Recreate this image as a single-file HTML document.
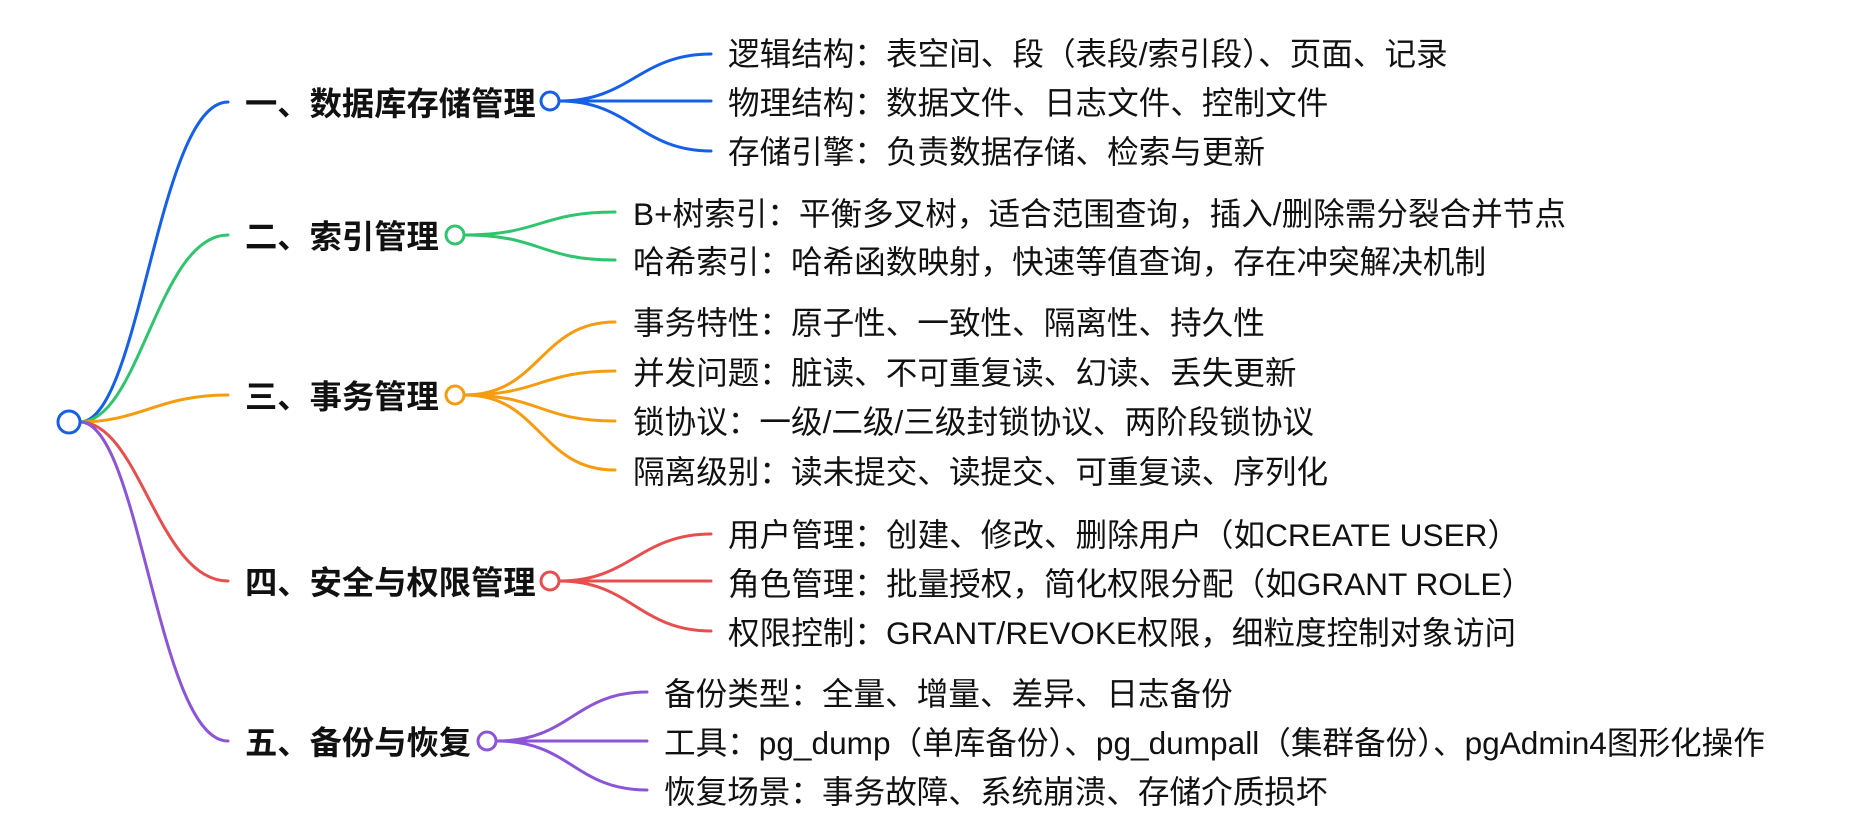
<!DOCTYPE html>
<html><head><meta charset="utf-8"><style>
html,body{margin:0;padding:0;background:#fff;}
svg{display:block}
text{font-family:"Liberation Sans","Noto Sans CJK SC",sans-serif;fill:#111;dominant-baseline:central}
.l{font-size:32.3px;font-weight:bold}
.c{font-size:31.6px}
path{fill:none;stroke-width:3;stroke-linecap:round}
circle{fill:#fff;stroke-width:3}
</style></head><body>
<svg width="1860" height="830" viewBox="0 0 1860 830" xmlns="http://www.w3.org/2000/svg">
<path d="M80,422 C140,422 158,102 228,102" stroke="#1560e6"/>
<path d="M80,422 C140,422 158,235 228,235" stroke="#2fc46d"/>
<path d="M80,422 C140,422 158,395 228,395" stroke="#f59c10"/>
<path d="M80,422 C140,422 158,581 228,581" stroke="#e5504f"/>
<path d="M80,422 C140,422 158,741 228,741" stroke="#8c55d6"/>
<circle cx="69" cy="422" r="11" stroke="#1560e6"/>

<text class="l" x="245" y="104">一、数据库存储管理</text>
<path d="M560,101 C630,101 640,54 711,54" stroke="#1560e6"/>
<path d="M560,101 L711,101" stroke="#1560e6"/>
<path d="M560,101 C630,101 640,151 711,151" stroke="#1560e6"/>
<circle cx="550" cy="101" r="9" stroke="#1560e6"/>
<text class="c" x="728" y="54">逻辑结构：表空间、段（表段/索引段）、页面、记录</text>
<text class="c" x="728" y="103">物理结构：数据文件、日志文件、控制文件</text>
<text class="c" x="728" y="152">存储引擎：负责数据存储、检索与更新</text>

<text class="l" x="245" y="237">二、索引管理</text>
<path d="M465,235 C540,235 540,212 615,212" stroke="#2fc46d"/>
<path d="M465,235 C540,235 540,260 615,260" stroke="#2fc46d"/>
<circle cx="455" cy="235" r="9" stroke="#2fc46d"/>
<text class="c" x="633" y="214">B+树索引：平衡多叉树，适合范围查询，插入/删除需分裂合并节点</text>
<text class="c" x="633" y="262">哈希索引：哈希函数映射，快速等值查询，存在冲突解决机制</text>

<text class="l" x="245" y="397">三、事务管理</text>
<path d="M465,395 C540,395 540,322 615,322" stroke="#f59c10"/>
<path d="M465,395 C540,395 540,371 615,371" stroke="#f59c10"/>
<path d="M465,395 C540,395 540,421 615,421" stroke="#f59c10"/>
<path d="M465,395 C540,395 540,470 615,470" stroke="#f59c10"/>
<circle cx="455" cy="395" r="9" stroke="#f59c10"/>
<text class="c" x="633" y="323">事务特性：原子性、一致性、隔离性、持久性</text>
<text class="c" x="633" y="373">并发问题：脏读、不可重复读、幻读、丢失更新</text>
<text class="c" x="633" y="422">锁协议：一级/二级/三级封锁协议、两阶段锁协议</text>
<text class="c" x="633" y="472">隔离级别：读未提交、读提交、可重复读、序列化</text>

<text class="l" x="245" y="583">四、安全与权限管理</text>
<path d="M560,581 C630,581 640,534 711,534" stroke="#e5504f"/>
<path d="M560,581 L711,581" stroke="#e5504f"/>
<path d="M560,581 C630,581 640,631 711,631" stroke="#e5504f"/>
<circle cx="550" cy="581" r="9" stroke="#e5504f"/>
<text class="c" x="728" y="535">用户管理：创建、修改、删除用户（如CREATE USER）</text>
<text class="c" x="728" y="584">角色管理：批量授权，简化权限分配（如GRANT ROLE）</text>
<text class="c" x="728" y="633">权限控制：GRANT/REVOKE权限，细粒度控制对象访问</text>

<text class="l" x="245" y="743">五、备份与恢复</text>
<path d="M497,741 C570,741 575,692 647,692" stroke="#8c55d6"/>
<path d="M497,741 L647,741" stroke="#8c55d6"/>
<path d="M497,741 C570,741 575,790 647,790" stroke="#8c55d6"/>
<circle cx="487" cy="741" r="9" stroke="#8c55d6"/>
<text class="c" x="664" y="694">备份类型：全量、增量、差异、日志备份</text>
<text class="c" x="664" y="743">工具：pg_dump（单库备份）、pg_dumpall（集群备份）、pgAdmin4图形化操作</text>
<text class="c" x="664" y="792">恢复场景：事务故障、系统崩溃、存储介质损坏</text>
</svg>
</body></html>
